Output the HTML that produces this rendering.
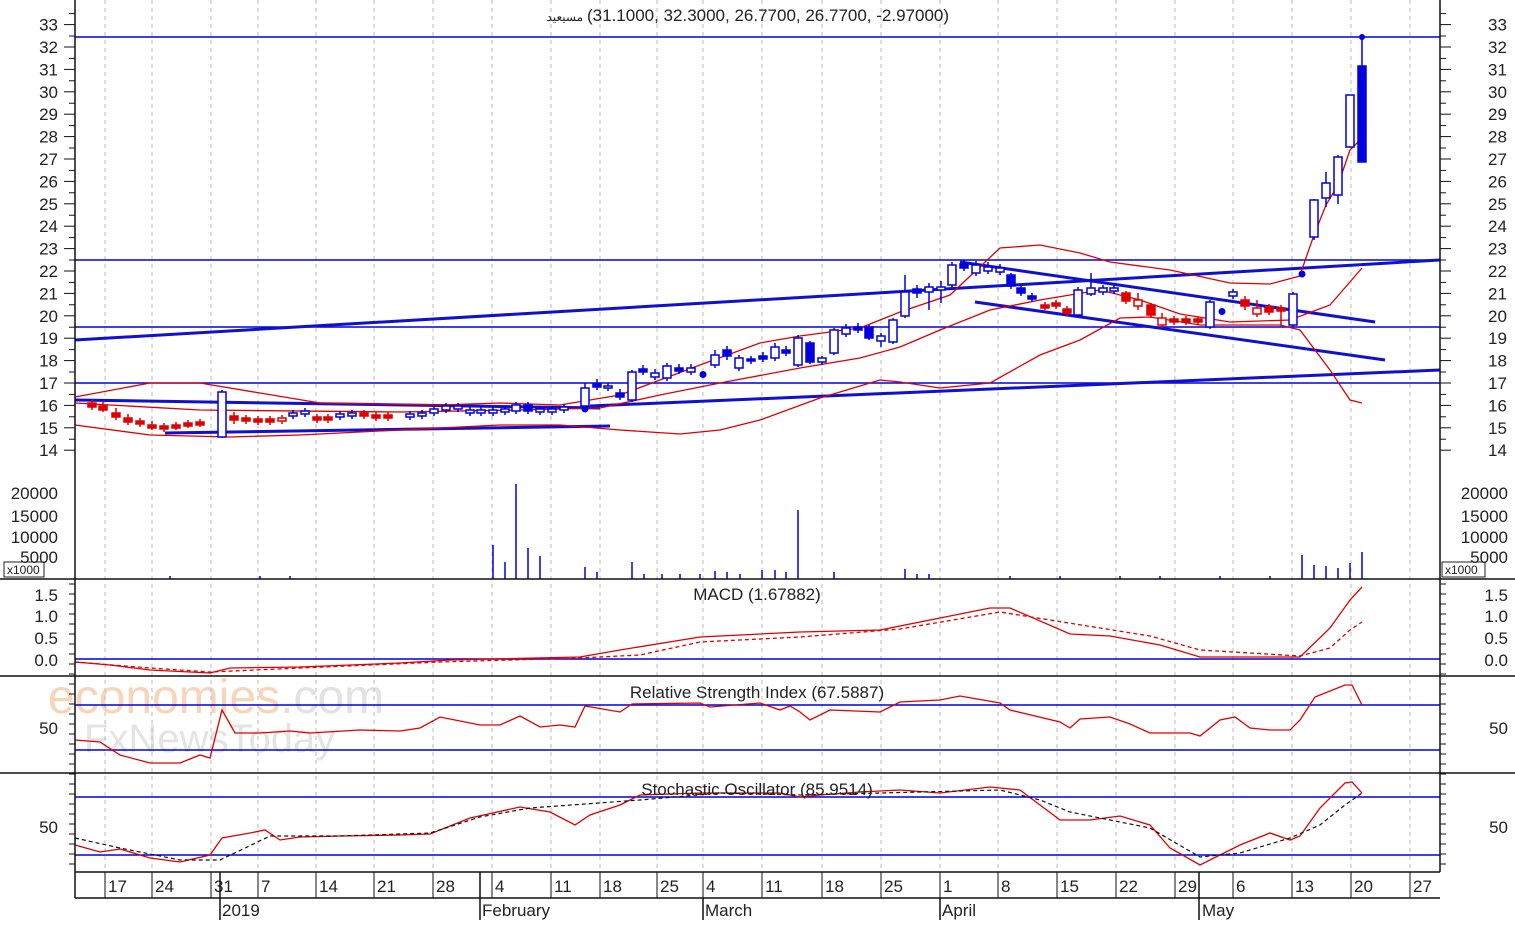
<!DOCTYPE html>
<html><head><meta charset="utf-8">
<style>
html,body{margin:0;padding:0;background:#fff;}
body{width:1515px;height:920px;overflow:hidden;font-family:"Liberation Sans",Arial,sans-serif;}
svg text{font-family:"Liberation Sans",Arial,sans-serif;fill:#222;}
</style></head><body>
<svg id="c" width="1515" height="920" viewBox="0 0 1515 920" xmlns="http://www.w3.org/2000/svg">
<rect width="1515" height="920" fill="#fff"/>
<!-- watermark -->
<text x="48" y="713" font-size="48" style="fill:#f8d4b8">economies<tspan style="fill:#e2e2e2">.com</tspan></text>
<text x="84" y="752" font-size="40" style="fill:#e4e4e4">FxNewsToday</text>

<g id="grid" stroke="#bbb" stroke-width="1" stroke-dasharray="4,4"></g>

<g stroke="#0000e0" stroke-width="1.5">
<line x1="75" y1="37" x2="1440" y2="37"/>
<line x1="75" y1="260" x2="1440" y2="260"/>
<line x1="75" y1="327" x2="1440" y2="327"/>
<line x1="75" y1="383" x2="1440" y2="383"/>
<line x1="75" y1="659" x2="1440" y2="659"/>
<line x1="75" y1="705" x2="1440" y2="705"/>
<line x1="75" y1="750" x2="1440" y2="750"/>
<line x1="75" y1="797" x2="1440" y2="797"/>
<line x1="75" y1="855" x2="1440" y2="855"/>
</g>
<g stroke="#1010d0" stroke-width="3" fill="none">
<line x1="75" y1="340" x2="1440" y2="260"/>
<line x1="590" y1="406" x2="1440" y2="370"/>
<line x1="75" y1="400" x2="600" y2="408"/>
<line x1="165" y1="433" x2="610" y2="426"/>
<line x1="960" y1="262" x2="1375" y2="322"/>
<line x1="975" y1="302" x2="1385" y2="360"/>
</g>
<g stroke="#e00000" stroke-width="1.3" fill="none">
<polyline points="75,397 150,383 200,383 260,393 320,403 440,405 500,403 560,405 620,395 700,365 760,343 800,336 860,328 900,312 950,295 1000,248 1040,245 1080,253 1110,262 1170,270 1230,283 1270,284 1300,276"/>
<polyline points="75,403 200,410 400,412 520,410 600,408 660,395 720,383 800,368 860,358 900,347 940,330 990,310 1040,300 1100,290 1140,300 1180,314 1230,322 1290,320 1330,305 1362,268"/>
<polyline points="75,425 150,435 230,437 300,435 400,430 500,425 560,425 620,430 680,434 720,430 760,420 820,398 880,380 900,382 940,388 990,383 1040,355 1080,340 1120,318 1150,317 1200,325 1280,325 1300,330 1330,370 1350,400 1362,403"/>
<polyline points="1300,275 1314,235 1326,205 1338,185 1350,150 1362,138"/>
</g>
<g id="candles"></g>
<g id="vol" stroke="#0000e0" stroke-width="1.5"></g>

<g stroke="#e00000" stroke-width="1.3" fill="none">
<polyline points="75,662 110,665 150,670 210,673 230,668 300,667 400,663 450,660 580,657 620,650 700,637 800,632 880,630 940,618 990,608 1010,608 1070,634 1110,636 1160,645 1200,657 1300,657 1330,628 1350,600 1362,587"/>
<polyline stroke-dasharray="4,3" points="75,662 150,668 210,672 300,668 440,662 580,658 640,655 700,642 800,637 900,629 1000,612 1050,620 1100,628 1150,636 1200,650 1300,656 1330,648 1350,630 1362,622"/>
<polyline points="75,740 100,742 120,755 150,763 180,763 200,755 210,758 222,710 235,733 260,733 290,731 310,733 360,730 400,731 420,728 440,717 480,725 500,725 520,716 540,727 560,725 575,727 585,706 620,712 632,704 700,703 710,707 760,703 780,710 790,706 800,712 810,720 830,710 880,712 900,702 940,700 960,696 1000,703 1010,710 1060,722 1070,728 1080,719 1110,717 1130,724 1150,733 1190,733 1200,736 1220,720 1235,717 1250,728 1270,730 1290,730 1300,720 1315,697 1345,685 1352,685 1362,705"/>
<polyline points="75,845 100,852 120,849 150,858 180,862 210,855 222,838 250,833 265,830 280,840 300,837 340,836 400,835 430,834 470,818 520,807 550,812 575,825 590,815 620,805 640,795 700,793 780,793 800,797 820,795 860,792 900,790 940,793 990,787 1020,790 1060,820 1090,820 1120,816 1150,825 1170,848 1200,865 1240,845 1270,833 1290,840 1300,836 1320,808 1345,783 1352,782 1362,793"/>
</g>
<polyline fill="none" stroke="#111" stroke-width="1.2" stroke-dasharray="4,3" points="75,838 120,848 180,860 220,860 270,836 340,836 430,833 480,817 530,808 640,800 720,793 800,795 1000,790 1040,800 1070,812 1110,820 1150,828 1200,857 1240,853 1290,838 1320,825 1345,805 1362,793"/>

<g stroke="#111" stroke-width="1.5" fill="none">
<line x1="75" y1="0" x2="75" y2="898"/>
<line x1="1440" y1="0" x2="1440" y2="872"/>
<line x1="0" y1="579" x2="1515" y2="579"/>
<line x1="0" y1="676" x2="1515" y2="676"/>
<line x1="0" y1="773" x2="1515" y2="773"/>
<line x1="75" y1="872" x2="1440" y2="872"/>
<line x1="75" y1="898" x2="1440" y2="898"/>
</g>
<g id="ticks" stroke="#111" stroke-width="1"></g>

<rect x="4" y="562" width="40" height="15" fill="#fff" stroke="#222"/>
<text x="7" y="574" font-size="12">x1000</text>
<rect x="1442" y="562" width="43" height="15" fill="#fff" stroke="#222"/>
<text x="1445" y="574" font-size="12">x1000</text>

<text x="583" y="21" font-size="12" text-anchor="end" font-family="'DejaVu Sans',sans-serif">مسيعيد</text>
<text x="587" y="21" font-size="17" direction="ltr" unicode-bidi="bidi-override">(31.1000, 32.3000, 26.7700, 26.7700, -2.97000)</text>
<text x="757" y="600" font-size="17" text-anchor="middle">MACD (1.67882)</text>
<text x="757" y="698" font-size="17" text-anchor="middle">Relative Strength Index (67.5887)</text>
<text x="757" y="795" font-size="17" text-anchor="middle">Stochastic Oscillator (85.9514)</text>

<g font-size="17" id="lbl"></g>
<g font-size="17">
<text x="222" y="916">2019</text><text x="482" y="916">February</text><text x="705" y="916">March</text><text x="942" y="916">April</text><text x="1202" y="916">May</text>
</g>
<g stroke="#111" stroke-width="1.5">
<line x1="220" y1="872" x2="220" y2="920"/><line x1="480" y1="872" x2="480" y2="920"/><line x1="703" y1="898" x2="703" y2="920"/><line x1="940" y1="898" x2="940" y2="920"/><line x1="1199" y1="872" x2="1199" y2="920"/>
</g>
</svg>
<script>
var NS="http://www.w3.org/2000/svg";
function el(p,t,a,txt){var e=document.createElementNS(NS,t);for(var k in a)e.setAttribute(k,a[k]);if(txt!==undefined)e.textContent=txt;document.getElementById(p).appendChild(e);return e;}
var dx=[105,152,211,258,316,374,433,492,551,600,657,703,762,822,881,940,998,1057,1116,1175,1233,1292,1351,1410];
var dl=["17","24","31","7","14","21","28","4","11","18","25","4","11","18","25","1","8","15","22","29","6","13","20","27"];
dx.forEach(function(x,i){el('grid','line',{x1:x,y1:0,x2:x,y2:872});el('ticks','line',{x1:x,y1:872,x2:x,y2:898});el('lbl','text',{x:x+3,y:892},dl[i]);});
for(var p=14;p<=33;p++){var y=271-(p-22)*22.4;el('lbl','text',{x:58,y:y+6,'text-anchor':'end'},p);el('lbl','text',{x:1488,y:y+6},p);
el('ticks','line',{x1:64,y1:y,x2:75,y2:y});el('ticks','line',{x1:1440,y1:y,x2:1451,y2:y});
el('ticks','line',{x1:69,y1:y-11,x2:75,y2:y-11});el('ticks','line',{x1:1440,y1:y-11,x2:1446,y2:y-11});}
[[20000,493],[15000,516],[10000,537],[5000,557]].forEach(function(v){el('lbl','text',{x:58,y:v[1]+6,'text-anchor':'end'},v[0]);el('lbl','text',{x:1508,y:v[1]+6,'text-anchor':'end'},v[0]);});
[["1.5",595],["1.0",616],["0.5",638],["0.0",660]].forEach(function(v){el('lbl','text',{x:58,y:v[1]+6,'text-anchor':'end'},v[0]);el('lbl','text',{x:1508,y:v[1]+6,'text-anchor':'end'},v[0]);});
[["50",728],["50",827]].forEach(function(v){el('lbl','text',{x:58,y:v[1]+6,'text-anchor':'end'},v[0]);el('lbl','text',{x:1508,y:v[1]+6,'text-anchor':'end'},v[0]);});
for(var y=584;y<872;y+=10){el('ticks','line',{x1:69,y1:y,x2:75,y2:y});el('ticks','line',{x1:1440,y1:y,x2:1446,y2:y});}
var C=[[92,403,407,400,410,'r'],[103,406,410,402,412,'r'],[116,413,417,408,420,'r'],[128,418,422,414,425,'r'],[140,421,424,418,427,'r'],[152,425,428,421,430,'r'],[164,426,429,423,432,'r'],[176,425,428,422,430,'r'],[188,423,426,420,428,'r'],[200,422,425,419,427,'r'],
[222,392,437,390,438,'b'],[234,416,420,412,424,'r'],[246,418,421,415,424,'r'],[258,419,422,416,425,'r'],[270,419,422,416,425,'r'],[282,418,421,415,424,'R'],[293,413,416,410,419,'b'],[305,411,414,408,417,'b'],[317,417,420,414,423,'r'],[328,417,420,414,423,'r'],[340,414,417,411,420,'b'],[352,413,416,410,419,'b'],[364,413,416,410,419,'r'],[376,415,418,412,421,'r'],[388,415,418,412,421,'r'],[410,414,417,411,420,'b'],[422,413,416,410,419,'b'],[434,409,413,406,416,'b'],[446,406,410,403,413,'b'],[458,406,409,403,412,'b'],[470,410,413,407,416,'b'],[481,410,413,407,416,'b'],[493,410,413,407,416,'b'],[505,409,412,406,415,'b'],[516,405,411,402,414,'b'],[528,405,411,402,414,'B'],[540,409,412,406,415,'b'],[552,409,412,406,415,'b'],[564,407,410,404,413,'b'],[585,408,410,406,412,'d'],
[585,388,406,383,410,'b'],[597,384,387,379,390,'B'],[608,386,388,383,391,'b'],[620,393,397,389,400,'B'],[632,372,400,370,402,'b'],[643,369,372,365,375,'B'],[655,373,377,369,380,'b'],[667,366,378,363,381,'b'],[679,368,371,364,374,'B'],[691,368,372,364,375,'b'],[703,373,376,370,379,'d'],[715,355,365,350,368,'b'],[727,350,356,346,360,'B'],[739,358,368,355,371,'b'],[751,359,361,356,364,'B'],[763,356,359,352,362,'B'],[775,347,358,343,361,'b'],[786,350,353,346,356,'B'],[798,338,365,335,367,'b'],[810,343,362,341,364,'B'],[822,358,362,356,365,'b'],[834,330,353,328,355,'b'],[846,328,334,324,337,'b'],[858,327,330,323,333,'B'],[869,327,338,325,340,'B'],[881,336,341,333,347,'b'],[893,320,342,318,344,'b'],[905,292,316,275,318,'b'],[917,289,293,285,298,'B'],[929,287,292,283,310,'b'],[941,287,290,281,303,'b'],[952,265,285,262,288,'b'],[964,264,268,260,271,'B'],[976,265,273,261,276,'b'],[988,267,271,262,274,'b'],[1000,268,272,264,275,'b'],[1011,275,286,273,289,'B'],[1021,288,293,286,296,'B'],[1032,296,299,293,302,'B'],[1045,305,308,302,310,'r'],[1056,303,306,300,309,'r'],[1067,309,313,306,316,'r'],[1078,290,315,287,317,'b'],[1091,288,294,273,296,'b'],[1103,288,292,285,295,'b'],[1114,288,291,285,294,'b'],[1126,293,301,291,304,'r'],[1138,300,306,293,310,'R'],[1151,305,315,303,318,'r'],[1162,318,325,313,328,'R'],[1174,319,322,316,325,'r'],[1186,319,322,316,325,'r'],[1198,319,322,316,325,'r'],[1210,302,327,300,329,'b'],[1222,310,313,308,315,'d'],[1233,292,296,289,299,'b'],[1245,300,306,296,310,'r'],[1257,308,314,300,317,'R'],[1269,307,312,304,315,'r'],[1281,308,311,305,326,'r'],[1293,294,325,292,327,'b'],[1302,273,275,248,275,'d'],[1314,200,237,199,240,'b'],[1326,183,198,172,207,'b'],[1338,157,195,155,204,'b'],[1350,95,147,95,147,'b'],[1362,66,162,37,162,'B']];
C.forEach(function(c){var x=c[0],t=c[5];var col=(t=='r'||t=='R')?'#e00000':'#0000e0';
if(t=='d'){el('candles','circle',{cx:x,cy:(c[1]+c[2])/2,r:3.5,fill:col});return;}
el('candles','line',{x1:x,y1:c[3],x2:x,y2:c[4],stroke:col,'stroke-width':1.5});
el('candles','rect',{x:x-4,y:c[1],width:8,height:Math.max(2,c[2]-c[1]),fill:(t=='b'||t=='R')?'#fff':col,stroke:col,'stroke-width':1.5});});
el('candles','circle',{cx:1362,cy:37,r:3,fill:'#0000e0'});
var V=[[493,545],[505,562],[516,484],[528,548],[540,556],[585,567],[597,572],[632,562],[644,574],[662,574],[680,574],[700,574],[715,571],[727,572],[740,574],[762,570],[775,570],[786,572],[798,510],[834,572],[905,569],[917,574],[929,574],[1302,555],[1314,565],[1326,566],[1338,568],[1350,563],[1362,552],[170,576],[260,576],[290,576],[1010,576],[1060,576],[1120,576],[1160,576],[1220,576],[1270,576]];
V.forEach(function(v){el('vol','line',{x1:v[0],y1:v[1],x2:v[0],y2:579});});
</script>
</body></html>
